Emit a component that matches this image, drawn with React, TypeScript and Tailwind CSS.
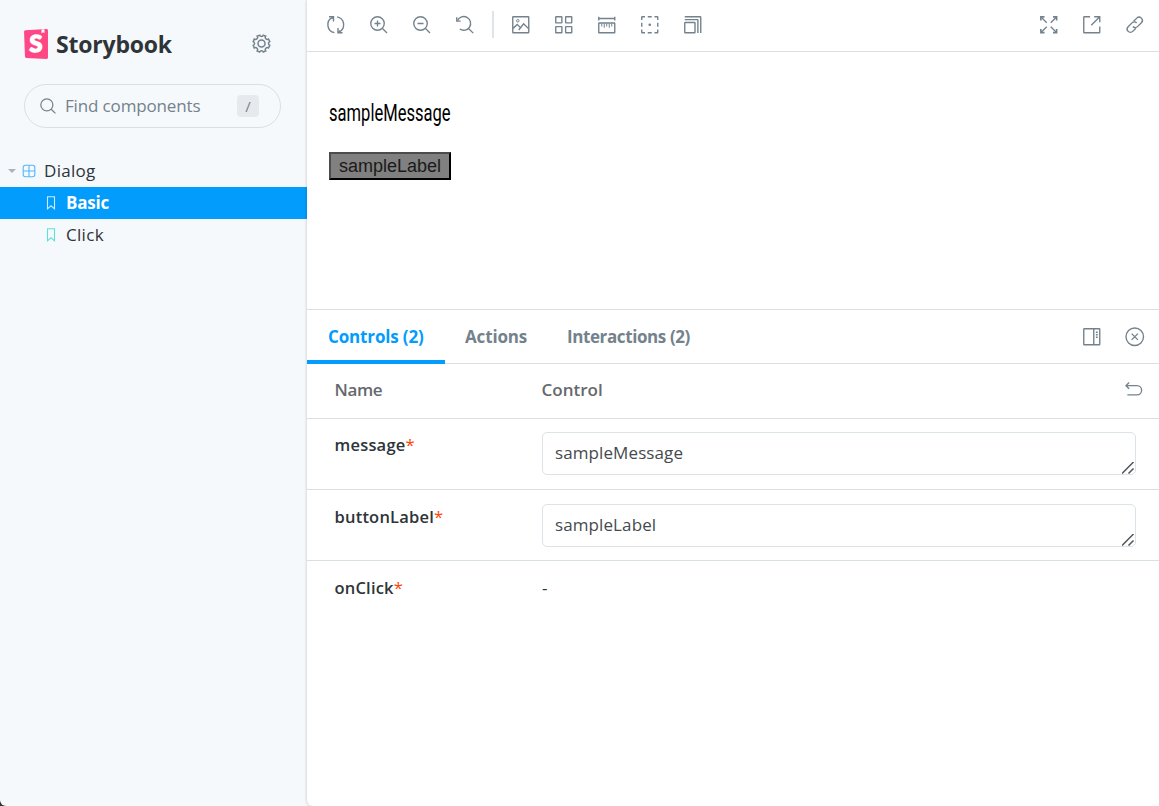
import type { ReactNode } from 'react';
import { clsx } from 'clsx';

const icons: Record<string, ReactNode> = {
  sync: (
    <>
      <path d="M5.9 13.3A6.4 6.4 0 0 1 4.2 1.3M8.1 .7a6.4 6.4 0 0 1 1.7 12" />
      <path d="M1.6 .6h3.6v3.8M12.4 13.4H8.8V9.6" />
      <path d="M5.2 .7 3.6 2.2M8.8 13.3l1.6-1.5" />
    </>
  ),
  zoomIn: (
    <>
      <circle cx="6" cy="6" r="5.4" />
      <path d="m10 10 3.6 3.6M6 3.6v4.8M3.6 6h4.8" />
    </>
  ),
  zoomOut: (
    <>
      <circle cx="6" cy="6" r="5.4" />
      <path d="m10 10 3.6 3.6M3.6 6h4.8" />
    </>
  ),
  zoomReset: (
    <>
      <path d="M1.2 3.6A5.5 5.5 0 1 1 3 10.4" />
      <path d="m10 10 3.8 3.7M.6 1v3.1h3.1" />
    </>
  ),
  photo: (
    <>
      <rect x=".6" y=".6" width="12.8" height="12.8" rx=".4" />
      <circle cx="4.6" cy="3.8" r="1" strokeWidth=".8" />
      <path d="m.8 9.9 3.4-3.2 3 3.2M5.4 11.2l3.9-5 4.1 4.1" />
    </>
  ),
  grid: (
    <>
      <rect x=".6" y=".6" width="4.9" height="4.9" rx=".3" />
      <rect x="8.5" y=".6" width="4.9" height="4.9" rx=".3" />
      <rect x=".6" y="8.5" width="4.9" height="4.9" rx=".3" />
      <rect x="8.5" y="8.5" width="4.9" height="4.9" rx=".3" />
    </>
  ),
  ruler: (
    <>
      <path d="M.6 .5v3M13.4 .5v3M.6 2h12.8" />
      <rect x=".6" y="5.6" width="12.8" height="7.8" rx=".3" />
      <path d="M3 6v2.4M5 6v3.4M7 6v2.4M9 6v3.4M11 6v2.4" strokeWidth=".8" />
    </>
  ),
  outline: (
    <>
      <path d="M.6 3.2V1q0-.4.4-.4h2.2M5.4 .6h3.2M10.8 .6H13q.4 0 .4.4v2.2M13.4 5.4v3.2M13.4 10.8V13q0 .4-.4.4h-2.2M8.6 13.4H5.4M3.2 13.4H1q-.4 0-.4-.4v-2.2M.6 8.6V5.4" />
      <circle cx="7" cy="7" r=".5" fill="currentColor" />
    </>
  ),
  viewport: (
    <>
      <rect x=".6" y="5.2" width="8.2" height="8.2" rx=".4" />
      <path d="M.6 2.9h10.2q.3 0 .3.3v10.3M.6 .6h12.3q.5 0 .5.5v12.4" />
    </>
  ),
  expand: (
    <>
      <path d="M.7 3.6V.7h2.9M10.4 .7h2.9v2.9M13.3 10.4v2.9h-2.9M3.6 13.3H.7v-2.9" strokeWidth="1.3" />
      <path d="m1 1 4.4 4.4M13 1 8.6 5.4M13 13 8.6 8.6M1 13l4.4-4.4" />
    </>
  ),
  share: (
    <>
      <path d="M5.6 .6H1q-.4 0-.4.4v12q0 .4.4.4h12q.4 0 .4-.4V8.4" />
      <path d="M9 .6h4.4V5M13.2 .8 6.6 7.4" />
    </>
  ),
  link: (
    <>
      <path d="m6.1 4.2 2.5-2.5a2.5 2.5 0 0 1 3.7 3.7L9.2 8.5a2.5 2.5 0 0 1-3.7-.1" />
      <path d="m7.9 9.8-2.5 2.5a2.5 2.5 0 0 1-3.7-3.7l3.1-3.1a2.5 2.5 0 0 1 3.7.1" />
    </>
  ),
  sidebar: (
    <>
      <rect x=".6" y=".6" width="12.8" height="12.8" rx=".4" />
      <path d="M8.6 .6v12.8M10.3 3.4h1.5M10.3 5.4h1.5M10.3 7.4h1.5" />
    </>
  ),
  close: (
    <>
      <circle cx="7" cy="7" r="7" />
      <path d="m4.5 4.5 5 5M9.5 4.5l-5 5" />
    </>
  ),
  undo: <path d="M2.5 1.2 0 3.7l2.5 2.5M.1 3.7h8.7a3.7 3.7 0 0 1 0 7.4H1.1" />,
  search: (
    <>
      <circle cx="6" cy="6" r="5.3" />
      <path d="m9.8 9.8 3.7 3.7" />
    </>
  ),
  component: (
    <>
      <rect x="1.2" y="1.2" width="11.6" height="11.6" rx="2.2" />
      <path d="M7 1.2v11.6M1.2 7h11.6" />
    </>
  ),
  bookmark: <path d="M3.5 .8h7v12.1L7 9.8l-3.5 3.1z" />,
  cog: (
    <>
      <circle cx="7" cy="7" r="2.6" />
      <path d="M5.7 .9a1.4 1.4 0 0 0 2.6 0l1.8.7a1.5 1.5 0 0 0 2.1 2.1l.9 1.9a1.5 1.5 0 0 0 0 2.8l-.9 1.9a1.5 1.5 0 0 0-2.1 2.1l-1.8.8a1.5 1.5 0 0 0-2.7 0l-1.8-.8a1.5 1.5 0 0 0-2.1-2.1L.9 8.4a1.5 1.5 0 0 0 0-2.8l.8-1.9a1.5 1.5 0 0 0 2.1-2.1z" />
    </>
  ),
};

function Icon({ name, className = 'size-[17.5px]' }: { name: string; className?: string }) {
  return (
    <svg
      viewBox="0 0 14 14"
      fill="none"
      stroke="currentColor"
      strokeWidth="1.1"
      className={clsx('shrink-0 overflow-visible', className)}
    >
      {icons[name]}
    </svg>
  );
}

function IconButton({ name }: { name: string }) {
  return (
    <button className="flex h-9 w-[43px] items-center justify-center text-[#73828c]">
      <Icon name={name} />
    </button>
  );
}

function Logo() {
  return (
    <svg viewBox="6 0 51.1 64" className="h-[30px] w-6">
      <path
        fill="#ff4785"
        d="M8 58.8 6.1 6.2c-.1-1.7 1.2-3.2 3-3.3L53.7.1c1.7-.1 3.3 1.2 3.4 3v57.5c0 1.8-1.5 3.2-3.3 3.2l-42.7-1.9A3.2 3.2 0 0 1 8 58.8z"
      />
      <path fill="#fff" d="m43.4.8-.3 8c0 .2.3.3.5.2l3-2.3 2.6 2c.2.2.5 0 .5-.2L49.4.4z" />
      <text
        x="31.5"
        y="49.5"
        textAnchor="middle"
        fill="#fff"
        stroke="#fff"
        strokeWidth="3.5"
        fontSize="50"
        fontWeight="700"
        fontFamily="Lato, sans-serif"
      >
        S
      </text>
    </svg>
  );
}

function Sidebar() {
  return (
    <aside className="flex w-[307px] shrink-0 flex-col">
      <div className="flex h-[84px] items-center pt-1 pr-9 pl-6">
        <Logo />
        <span className="ml-2 font-['Open_Sans'] text-[23px] font-bold tracking-[-0.2px]">Storybook</span>
        <span className="mb-0.5 ml-auto text-[#73828c]">
          <Icon name="cog" className="size-[19px]" />
        </span>
      </div>
      <div className="ml-6 flex h-11 w-[257px] items-center rounded-full border border-[#d9e0e2] pr-[21px] pl-[15px] text-[#73828c]">
        <Icon name="search" className="size-4" />
        <span className="ml-[9px] text-[17px] tracking-[-0.15px]">Find components</span>
        <kbd className="ml-auto flex h-[22px] w-[22px] items-center justify-center rounded-[4px] bg-[#e6eaed] font-['Open_Sans'] text-[15px]">
          /
        </kbd>
      </div>
      <nav className="mt-[27px] text-[17px]">
        <div className="flex h-8 items-center pl-2">
          <span className="border-x-4 border-t-4 border-x-transparent border-t-[#a9b3b9]" />
          <Icon name="component" className="ml-1.5 size-3.5 text-[#53b6fb]" />
          <span className="ml-2 tracking-[0.3px]">Dialog</span>
        </div>
        <div className="flex h-8 items-center bg-[#029cfd] pl-11 font-bold text-white">
          <Icon name="bookmark" className="size-3.5 text-white/80" />
          <span className="ml-2 tracking-[-0.2px]">Basic</span>
        </div>
        <div className="flex h-8 items-center pl-11">
          <Icon name="bookmark" className="size-3.5 text-[#5fdfd8]" />
          <span className="ml-2 tracking-[0.3px]">Click</span>
        </div>
      </nav>
    </aside>
  );
}

function Toolbar() {
  return (
    <div className="flex h-[52px] shrink-0 items-center border-b border-[#d9e0e4] pr-[3px] pb-0.5 pl-[7px]">
      {['sync', 'zoomIn', 'zoomOut', 'zoomReset'].map((name) => (
        <IconButton key={name} name={name} />
      ))}
      <span className="mr-[5px] ml-[6px] h-[27px] w-0.5 bg-[#dee4e8]" />
      {['photo', 'grid', 'ruler', 'outline', 'viewport'].map((name) => (
        <IconButton key={name} name={name} />
      ))}
      <div className="ml-auto flex">
        {['expand', 'share', 'link'].map((name) => (
          <IconButton key={name} name={name} />
        ))}
      </div>
    </div>
  );
}

function ArgRow({ name, value, className }: { name: string; value?: string; className: string }) {
  return (
    <div className={clsx('flex items-start pr-[23px] pl-[27.5px]', className)}>
      <div className="w-[207.5px] pt-px font-['Open_Sans'] text-[16.5px] leading-6 font-semibold tracking-[0.2px]">
        {name}
        <span className="font-normal text-[#ff4400]">*</span>
      </div>
      {value ? (
        <div className="relative h-[43px] flex-1 rounded-[5px] border border-[#dbe3e7] px-3 leading-[39px] tracking-[0.1px] text-[#454a4e]">
          {value}
          <svg viewBox="0 0 12 12" className="absolute right-px bottom-0 size-3" stroke="#50555a" strokeWidth="1.5">
            <path d="M0 11.5 11.5 0M6.5 11.5l5-5" />
          </svg>
        </div>
      ) : (
        <span className="pt-px leading-6">-</span>
      )}
    </div>
  );
}

function Panel() {
  return (
    <section className="flex flex-1 flex-col border-t border-[#d9e0e4]">
      <div className="flex h-[54px] border-b border-[#d9e0e4] pr-[3px] font-['Open_Sans'] text-[17px] font-bold text-[#73828c]">
        <div className="-mb-px w-[138px] border-b-4 border-[#029cfd] pl-[21px] leading-[54px] tracking-[-0.15px] text-[#029cfd]">
          Controls (2)
        </div>
        <div className="w-[102px] pl-5 leading-[54px] tracking-[-0.15px]">Actions</div>
        <div className="pl-5 leading-[54px] tracking-[-0.4px]">Interactions (2)</div>
        <div className="ml-auto flex items-center">
          <IconButton name="sidebar" />
          <IconButton name="close" />
        </div>
      </div>
      <div className="flex h-[55px] items-center border-b border-[#d9e0e4] pr-[3px] pb-0.5 pl-[27.5px] font-['Open_Sans'] text-[17px] font-semibold text-[#65696d]">
        <span className="w-[207px] tracking-[-0.4px]">Name</span>
        <span>Control</span>
        <div className="ml-auto">
          <IconButton name="undo" />
        </div>
      </div>
      <div className="text-[17px]">
        <ArgRow name="message" value="sampleMessage" className="h-[71px] border-b border-[#d9e0e4] pt-[13px]" />
        <ArgRow name="buttonLabel" value="sampleLabel" className="h-[71px] border-b border-[#d9e0e4] pt-[14px]" />
        <ArgRow name="onClick" className="pt-[14px]" />
      </div>
    </section>
  );
}

export default function App() {
  return (
    <div className="h-screen bg-[#2b3238]">
      <div className="flex h-screen overflow-hidden rounded-bl-md bg-[#f6f9fc] font-['Open_Sans',sans-serif] text-[#2e3438]">
        <Sidebar />
        <main className="flex flex-1 flex-col rounded-bl-md bg-white shadow-[0_0_3px_rgba(0,0,0,0.25)]">
          <Toolbar />
          <div className="h-[257px] shrink-0 pt-[46px] pl-[22px] text-black">
            <p className="h-[30px] w-max origin-left scale-x-[0.72] font-['Roboto'] text-[23px] leading-[31px]">sampleMessage</p>
            <button className="mt-6 block h-7 w-[122px] border-2 border-t-[#4c4c4c] border-r-black border-b-black border-l-[#4c4c4c] bg-[#808080] font-['Liberation_Sans'] text-[18px] leading-6 text-[#1a1a1a]">
              sampleLabel
            </button>
          </div>
          <Panel />
        </main>
      </div>
    </div>
  );
}
